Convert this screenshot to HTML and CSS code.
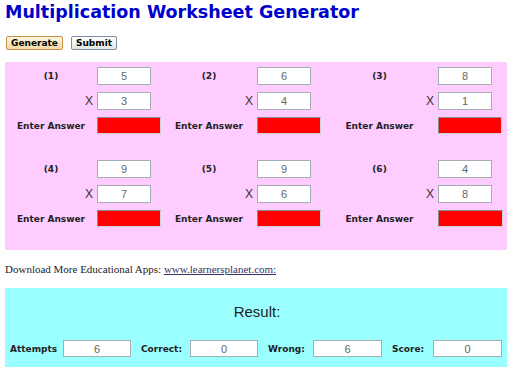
FILE: index.html
```html
<!DOCTYPE html>
<html>
<head>
    <link rel="stylesheet" href="styles.css">
</head>
<body>
    <h1 class="title">Multiplication Worksheet Generator</h1>
    <div class="actions">
        <button class="btn btn-generate">Generate</button>
        <button class="btn">Submit</button>
    </div>

    <div class="sheet">
        <!-- block 1: problems 1-3 -->
        <span class="label">(1)</span><input class="num" type="text" value="5">
        <span class="label">(2)</span><input class="num" type="text" value="6">
        <span class="label">(3)</span><input class="num" type="text" value="8">

        <span class="label times">X</span><input class="num" type="text" value="3">
        <span class="label times">X</span><input class="num" type="text" value="4">
        <span class="label times">X</span><input class="num" type="text" value="1">

        <span class="label">Enter Answer</span><input class="answer" type="text">
        <span class="label">Enter Answer</span><input class="answer" type="text">
        <span class="label">Enter Answer</span><input class="answer" type="text">

        <div class="spacer"></div>

        <!-- block 2: problems 4-6 -->
        <span class="label">(4)</span><input class="num" type="text" value="9">
        <span class="label">(5)</span><input class="num" type="text" value="9">
        <span class="label">(6)</span><input class="num" type="text" value="4">

        <span class="label times">X</span><input class="num" type="text" value="7">
        <span class="label times">X</span><input class="num" type="text" value="6">
        <span class="label times">X</span><input class="num" type="text" value="8">

        <span class="label">Enter Answer</span><input class="answer" type="text">
        <span class="label">Enter Answer</span><input class="answer" type="text">
        <span class="label">Enter Answer</span><input class="answer" type="text">
    </div>

    <p class="more">Download More Educational Apps: <a href="#">www.learnersplanet.com:</a></p>

    <div class="result">
        <h2 class="result-title">Result:</h2>
        <div class="score-row">
            <span class="label">Attempts</span><input class="stat" type="text" value="6">
            <span class="label">Correct:</span><input class="stat" type="text" value="0">
            <span class="label">Wrong:</span><input class="stat" type="text" value="6">
            <span class="label">Score:</span><input class="stat" type="text" value="0">
        </div>
    </div>
</body>
</html>
```

FILE: styles.css
```css
body {
    margin: 0 5px;
    background-color: #fff;
    font-family: "DejaVu Sans", Verdana, sans-serif;
    color: #222;
}
.title {
    margin: 0;
    padding-top: 1px;
    font-size: 17.5px;
    line-height: 22px;
    font-weight: bold;
    color: #0000cc;
}
.actions {
    display: flex;
    gap: 8px;
    margin: 13px 0 0 1px;
}
.btn {
    height: 14px;
    padding: 0 4px;
    font-family: "DejaVu Sans", Verdana, sans-serif;
    font-size: 9px;
    font-weight: bold;
    line-height: 12px;
    color: #000;
    background: linear-gradient(#ffffff, #e6e6e0);
    border: 1px solid #7f8ea6;
    border-radius: 2px;
}
.btn-generate {
    background: linear-gradient(#fff6df, #efd9a6);
    border-color: #c8904a;
}

/* worksheet */
.sheet {
    display: grid;
    grid-template-columns: 92px 64px 96px 64px 117px 65px;
    grid-template-rows: 18px 18px 17px 12px 18px 18px 17px;
    row-gap: 7px;
    align-items: center;
    width: 504px;
    margin-top: 12px;
    padding: 5px 0 23px;
    background-color: #ffccff;
}
.label {
    font-size: 9px;
    font-weight: bold;
    text-align: center;
    color: #222;
}
.label.times {
    text-align: right;
    padding-right: 4px;
    font-family: "Liberation Sans", Arial, sans-serif;
    font-weight: normal;
    font-size: 12px;
    color: #333;
}
.spacer {
    grid-column: 1 / -1;
}
.num,
.stat {
    box-sizing: border-box;
    height: 18px;
    padding: 0;
    font-family: "Liberation Sans", Arial, sans-serif;
    font-size: 11px;
    text-align: center;
    color: #666;
    background-color: #fff;
    border: 1px solid #a5acb2;
}
.num {
    width: 54px;
}
.answer {
    box-sizing: border-box;
    width: 64px;
    height: 17px;
    padding: 0;
    background-color: #ff0000;
    border: 1px solid #8c8c8c;
    border-right-color: #d0d0d0;
    border-bottom-color: #d0d0d0;
}
.sheet .answer:last-child {
    width: 65px;
}

.more {
    margin: 12px 0 0;
    font-family: "Liberation Serif", "Times New Roman", serif;
    font-size: 11px;
    line-height: 14px;
    color: #222;
}
.more a {
    color: #333366;
}

/* results */
.result {
    width: 504px;
    margin-top: 12px;
    padding: 15px 0 10px;
    background-color: #99ffff;
}
.result-title {
    margin: 0;
    font-family: "Liberation Sans", Arial, sans-serif;
    font-size: 15px;
    font-weight: normal;
    line-height: 18px;
    text-align: center;
    color: #222;
}
.score-row {
    display: grid;
    grid-template-columns: 43px 68px 39px 68px 35px 69px 31px 69px;
    column-gap: 10px;
    align-items: center;
    margin-top: 19px;
    padding-left: 5px;
}
.score-row .label {
    text-align: left;
    white-space: nowrap;
}
.stat {
    width: 100%;
    height: 17px;
}
```
